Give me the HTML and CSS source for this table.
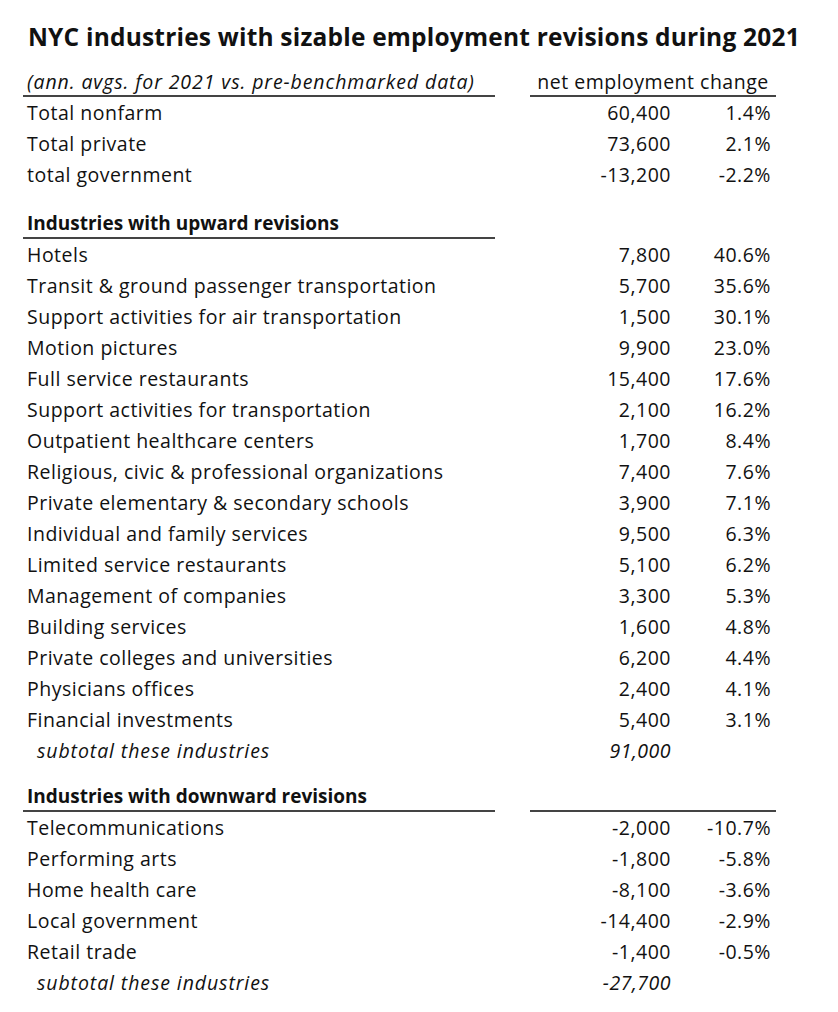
FILE: index.html
```html
<!DOCTYPE html>
<html>
<head>
<meta charset="utf-8">
<link rel="stylesheet" href="styles.css">
</head>
<body>
<div class="sheet">
  <div class="title">NYC industries with sizable employment revisions during 2021</div>

  <div class="row head">
    <div class="lab ul it">(ann. avgs. for 2021 vs. pre-benchmarked data)</div>
    <div></div>
    <div class="colhead ul">net employment change</div>
  </div>
  <div class="row"><div class="lab">Total nonfarm</div><div></div><div class="num">60,400</div><div class="pct">1.4%</div></div>
  <div class="row"><div class="lab">Total private</div><div></div><div class="num">73,600</div><div class="pct">2.1%</div></div>
  <div class="row"><div class="lab">total government</div><div></div><div class="num">-13,200</div><div class="pct">-2.2%</div></div>

  <div class="spacer-a"></div>
  <div class="row head">
    <div class="lab ul bold">Industries with upward revisions</div>
  </div>
  <div class="row"><div class="lab">Hotels</div><div></div><div class="num">7,800</div><div class="pct">40.6%</div></div>
  <div class="row"><div class="lab">Transit &amp; ground passenger transportation</div><div></div><div class="num">5,700</div><div class="pct">35.6%</div></div>
  <div class="row"><div class="lab">Support activities for air transportation</div><div></div><div class="num">1,500</div><div class="pct">30.1%</div></div>
  <div class="row"><div class="lab">Motion pictures</div><div></div><div class="num">9,900</div><div class="pct">23.0%</div></div>
  <div class="row"><div class="lab">Full service restaurants</div><div></div><div class="num">15,400</div><div class="pct">17.6%</div></div>
  <div class="row"><div class="lab">Support activities for transportation</div><div></div><div class="num">2,100</div><div class="pct">16.2%</div></div>
  <div class="row"><div class="lab">Outpatient healthcare centers</div><div></div><div class="num">1,700</div><div class="pct">8.4%</div></div>
  <div class="row"><div class="lab">Religious, civic &amp; professional organizations</div><div></div><div class="num">7,400</div><div class="pct">7.6%</div></div>
  <div class="row"><div class="lab">Private elementary &amp; secondary schools</div><div></div><div class="num">3,900</div><div class="pct">7.1%</div></div>
  <div class="row"><div class="lab">Individual and family services</div><div></div><div class="num">9,500</div><div class="pct">6.3%</div></div>
  <div class="row"><div class="lab">Limited service restaurants</div><div></div><div class="num">5,100</div><div class="pct">6.2%</div></div>
  <div class="row"><div class="lab">Management of companies</div><div></div><div class="num">3,300</div><div class="pct">5.3%</div></div>
  <div class="row"><div class="lab">Building services</div><div></div><div class="num">1,600</div><div class="pct">4.8%</div></div>
  <div class="row"><div class="lab">Private colleges and universities</div><div></div><div class="num">6,200</div><div class="pct">4.4%</div></div>
  <div class="row"><div class="lab">Physicians offices</div><div></div><div class="num">2,400</div><div class="pct">4.1%</div></div>
  <div class="row"><div class="lab">Financial investments</div><div></div><div class="num">5,400</div><div class="pct">3.1%</div></div>
  <div class="row sub"><div class="lab">subtotal these industries</div><div></div><div class="num">91,000</div><div class="pct"></div></div>

  <div class="spacer-b"></div>
  <div class="row head">
    <div class="lab ul bold">Industries with downward revisions</div>
    <div></div>
    <div class="colhead ul"></div>
  </div>
  <div class="row"><div class="lab">Telecommunications</div><div></div><div class="num">-2,000</div><div class="pct">-10.7%</div></div>
  <div class="row"><div class="lab">Performing arts</div><div></div><div class="num">-1,800</div><div class="pct">-5.8%</div></div>
  <div class="row"><div class="lab">Home health care</div><div></div><div class="num">-8,100</div><div class="pct">-3.6%</div></div>
  <div class="row"><div class="lab">Local government</div><div></div><div class="num">-14,400</div><div class="pct">-2.9%</div></div>
  <div class="row"><div class="lab">Retail trade</div><div></div><div class="num">-1,400</div><div class="pct">-0.5%</div></div>
  <div class="row sub"><div class="lab">subtotal these industries</div><div></div><div class="num">-27,700</div><div class="pct"></div></div>
</div>
</body>
</html>
```

FILE: styles.css
```css
html, body {
  margin: 0;
  padding: 0;
  background: #ffffff;
}
body {
  font-family: "Open Sans", "Noto Sans", sans-serif;
  color: #111111;
}
.sheet {
  width: 838px;
  padding-left: 23px;
  box-sizing: border-box;
}
.title {
  height: 64px;
  box-sizing: border-box;
  padding-top: 22px;
  padding-left: 5px;
  font-size: 24.5px;
  letter-spacing: 0.2px;
  line-height: 30px;
  font-weight: 700;
  white-space: nowrap;
}
.row {
  display: grid;
  grid-template-columns: 472px 35px 146px 100px;
  align-items: start;
  font-size: 19.5px;
  letter-spacing: 0.5px;
}
.row > div {
  height: 31px;
  line-height: 31px;
  white-space: nowrap;
}
.head > div {
  box-sizing: border-box;
  height: 31px;
  padding-top: 4px;
  line-height: 27px;
}
.head > .ul {
  height: 33px;
}
.lab {
  padding-left: 4px;
}
.num, .pct {
  text-align: right;
  padding-right: 5px;
}
.colhead {
  grid-column: 3 / 5;
  text-align: center;
}
.ul {
  border-bottom: 2px solid #444444;
}
.it {
  font-style: italic;
  letter-spacing: 0.9px;
}
.bold {
  font-weight: 700;
  font-size: 19px;
  letter-spacing: 0;
}
.sub {
  font-style: italic;
}
.sub .lab {
  padding-left: 14px;
  letter-spacing: 0.9px;
}
.spacer-a {
  height: 16px;
}
.spacer-b {
  height: 13px;
}
```
